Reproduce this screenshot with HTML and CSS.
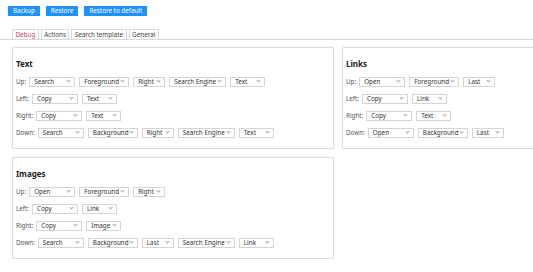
FILE: index.html
```html
<!DOCTYPE html>
<html lang="en">
<head>
<meta charset="utf-8">
<title>Options</title>
<link rel="stylesheet" href="styles.css">
</head>
<body>
<div class="toolbar">
  <button class="btn">Backup</button>
  <button class="btn">Restore</button>
  <button class="btn">Restore to default</button>
</div>
<div class="tabs">
  <span class="tab active">Debug</span>
  <span class="tab">Actions</span>
  <span class="tab">Search template</span>
  <span class="tab">General</span>
</div>
<div class="panels">
  <section class="box">
    <h3 class="title">Text</h3>
    <div class="row"><span class="lbl">Up:</span>
      <span class="sel w-act">Search</span><span class="sel w-dir">Foreground</span><span class="sel w-pos">Right</span><span class="sel w-eng">Search Engine</span><span class="sel w-typ">Text</span></div>
    <div class="row"><span class="lbl">Left:</span>
      <span class="sel w-act">Copy</span><span class="sel w-typ">Text</span></div>
    <div class="row"><span class="lbl">Right:</span>
      <span class="sel w-act">Copy</span><span class="sel w-typ">Text</span></div>
    <div class="row"><span class="lbl">Down:</span>
      <span class="sel w-act">Search</span><span class="sel w-dir">Background</span><span class="sel w-pos">Right</span><span class="sel w-eng">Search Engine</span><span class="sel w-typ">Text</span></div>
  </section>
  <section class="box">
    <h3 class="title">Links</h3>
    <div class="row"><span class="lbl">Up:</span>
      <span class="sel w-act">Open</span><span class="sel w-dir">Foreground</span><span class="sel w-pos">Last</span></div>
    <div class="row"><span class="lbl">Left:</span>
      <span class="sel w-act">Copy</span><span class="sel w-typ">Link</span></div>
    <div class="row"><span class="lbl">Right:</span>
      <span class="sel w-act">Copy</span><span class="sel w-typ">Text</span></div>
    <div class="row"><span class="lbl">Down:</span>
      <span class="sel w-act">Open</span><span class="sel w-dir">Background</span><span class="sel w-pos">Last</span></div>
  </section>
  <section class="box">
    <h3 class="title">Images</h3>
    <div class="row"><span class="lbl">Up:</span>
      <span class="sel w-act">Open</span><span class="sel w-dir">Foreground</span><span class="sel w-pos">Right</span></div>
    <div class="row"><span class="lbl">Left:</span>
      <span class="sel w-act">Copy</span><span class="sel w-typ">Link</span></div>
    <div class="row"><span class="lbl">Right:</span>
      <span class="sel w-act">Copy</span><span class="sel w-typ">Image</span></div>
    <div class="row"><span class="lbl">Down:</span>
      <span class="sel w-act">Search</span><span class="sel w-dir">Background</span><span class="sel w-pos">Last</span><span class="sel w-eng">Search Engine</span><span class="sel w-typ">Link</span></div>
  </section>
</div>
</body>
</html>
```
FILE: styles.css
```css
html, body {
  margin: 0;
  padding: 0;
  overflow: hidden;
  background: #fff;
}
body {
  font-family: "Noto Sans", "Open Sans", sans-serif;
  font-size: 6.3px;
  color: #333;
}
.toolbar {
  display: flex;
  gap: 6px;
  padding: 6px 0 0 8px;
}
.btn {
  font: inherit;
  height: 10px;
  line-height: 10px;
  padding: 0 5px;
  border: none;
  background: #1e90ff;
  color: #fff;
  border-radius: 0;
}
.tabs {
  display: flex;
  gap: 2px;
  margin-top: 13px;
  padding-left: 12px;
  border-bottom: 1px solid #d8d8d8;
  height: 10px;
}
.tab {
  border: 1px solid #d8d8d8;
  border-bottom: none;
  padding: 0 2.5px;
  line-height: 9px;
  color: #444;
  background: #fff;
}
.tab.active {
  color: #e0405a;
}
.panels {
  display: flex;
  flex-wrap: wrap;
  gap: 8px;
  width: 660px;
  padding: 7px 0 0 12px;
}
.box {
  box-sizing: border-box;
  width: 322px;
  border: 1px solid #dcdcdc;
  border-radius: 2px;
  box-shadow: 0 0 2px rgba(0,0,0,0.08);
  padding: 10px 3px 7px 3px;
}
.title {
  margin: 0 0 3px 0;
  font-size: 8px;
  line-height: 12px;
  font-weight: bold;
  color: #222;
}
.row {
  display: flex;
  align-items: center;
  gap: 4px;
  height: 17px;
}
.lbl {
  color: #555;
  margin-right: -1px;
}
.sel {
  position: relative;
  box-sizing: border-box;
  height: 10px;
  line-height: 8px;
  border: 1px solid #d4d4d4;
  padding-left: 4px;
  color: #333;
  background: #fff;
}
.sel::after {
  content: "";
  position: absolute;
  right: 4px;
  top: 1.5px;
  width: 2px;
  height: 2px;
  border-right: 1px solid #aaa;
  border-bottom: 1px solid #aaa;
  transform: rotate(45deg);
}
.w-act { width: 46px; }
.w-dir { width: 50px; }
.w-pos { width: 32px; }
.w-eng { width: 57px; }
.w-typ { width: 35px; }
```
